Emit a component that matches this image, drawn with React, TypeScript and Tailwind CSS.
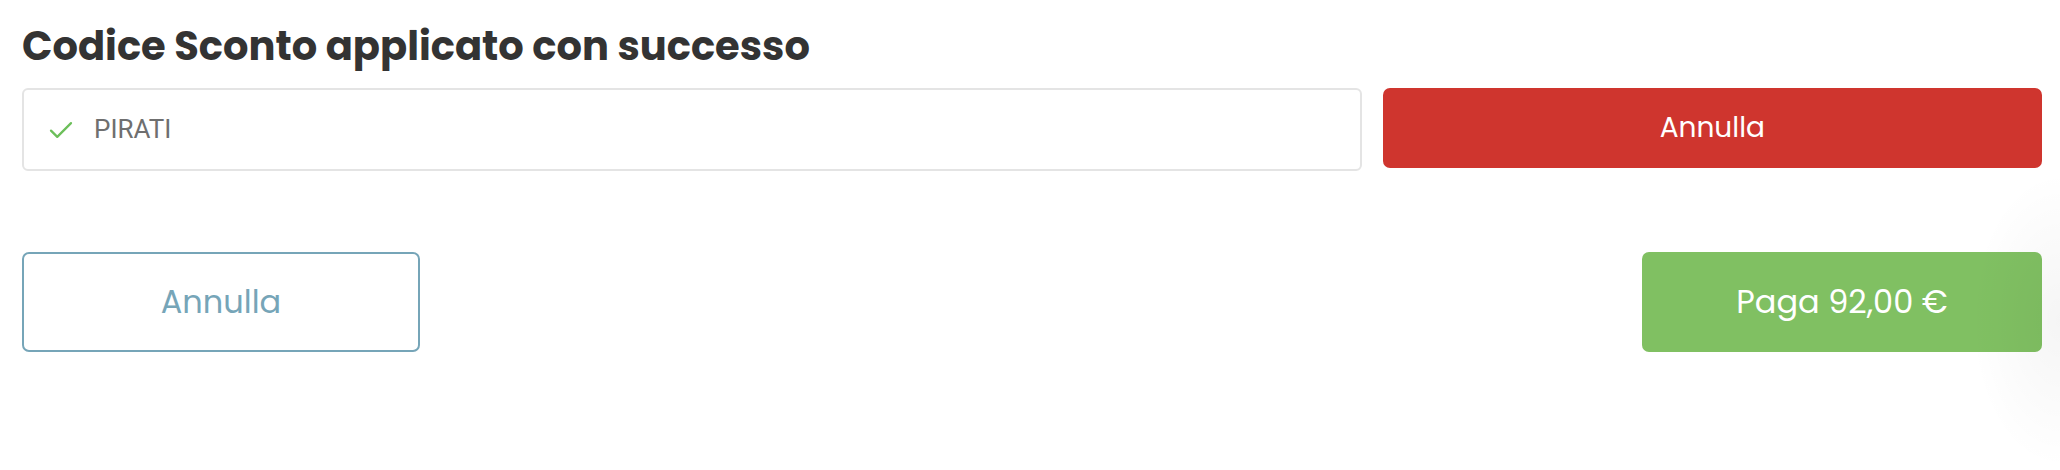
export default function App() {
  return (
    <div className="relative min-h-[470px] w-full overflow-hidden bg-white pl-[22px] pr-[18px] pt-[23px] font-['Poppins','DejaVu_Sans',sans-serif]">
      <h2 className="text-[40px] font-bold leading-[46px] text-[#333333]">
        Codice Sconto applicato con successo
      </h2>

      <div className="mt-[19px] grid grid-cols-3 items-start gap-[21px]">
        <div className="col-span-2 flex h-[83px] items-center rounded-[6px] border-2 border-[#e4e4e4] bg-white pl-[22px]">
          <svg className="h-[30px] w-[30px] text-[#6cbf5a]" viewBox="0 0 24 24" fill="none" stroke="currentColor" strokeWidth={1.8} strokeLinecap="round" strokeLinejoin="round">
            <path d="M4 12.5l5 5L20 6.5" />
          </svg>
          <span className="ml-[18px] font-['Roboto',sans-serif] text-[26px] text-[#6f6f6f]">PIRATI</span>
        </div>
        <button className="flex h-[80px] items-center justify-center rounded-[7px] bg-[#cf352e] text-[28px] text-white">
          Annulla
        </button>
      </div>

      <div className="mt-[81px] flex items-start justify-between">
        <button className="flex h-[100px] w-[398px] items-center justify-center rounded-[7px] border-2 border-[#76a5b8] bg-white text-[32px] text-[#76a5b8]">
          Annulla
        </button>
        <button className="flex h-[100px] w-[400px] items-center justify-center rounded-[7px] bg-[#80c062] text-[32px] text-white">
          Paga 92,00 €
        </button>
      </div>

      <div className="pointer-events-none absolute right-0 top-[170px] h-[300px] w-[90px] bg-[radial-gradient(ellipse_at_right,rgba(0,0,0,0.04),transparent_70%)]" />
    </div>
  );
}
